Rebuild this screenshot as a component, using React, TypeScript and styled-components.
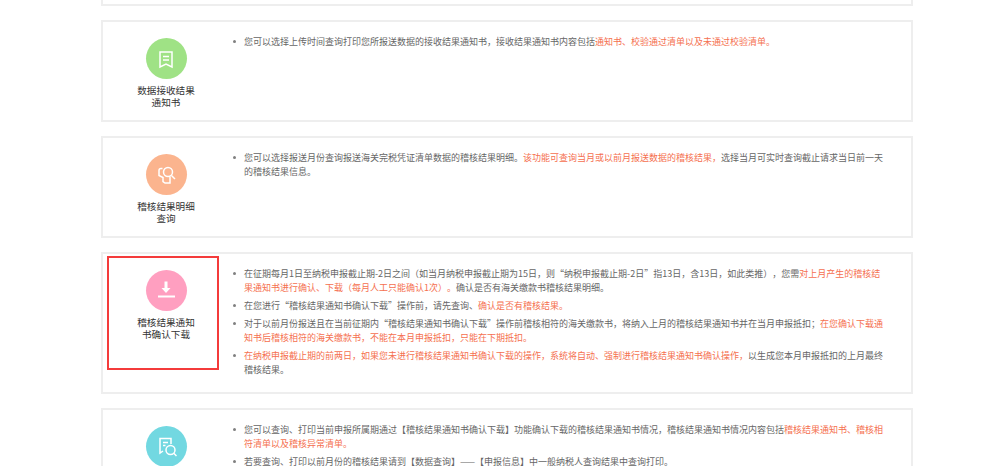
import React from "react";
import styled, { createGlobalStyle } from "styled-components";

const GlobalStyle = createGlobalStyle`
  html, body {
    margin: 0;
    padding: 0;
    height: 466px;
    overflow: hidden;
    background: #fff;
  }
`;

const Page = styled.div`
  padding: 0 87px 0 101px;
  font-family: "Noto Sans CJK SC", "Liberation Sans", sans-serif;
`;

const TopStub = styled.div`
  height: 4px;
  border: 2px solid #eeeeee;
  border-top: none;
  margin-bottom: 14px;
`;

const Card = styled.section<{ $height: number }>`
  position: relative;
  display: flex;
  box-sizing: border-box;
  height: ${(p) => p.$height}px;
  margin-bottom: 14px;
  border: 2px solid #eeeeee;
`;

const Side = styled.div`
  flex: none;
  width: 126px;
  padding-top: 16px;
  display: flex;
  flex-direction: column;
  align-items: center;
`;

const Circle = styled.div<{ $color: string }>`
  width: 41px;
  height: 41px;
  border-radius: 50%;
  background: ${(p) => p.$color};
  display: flex;
  align-items: center;
  justify-content: center;
`;

const Title = styled.div`
  width: 60px;
  margin-top: 6px;
  font-size: 9.6px;
  line-height: 11.5px;
  color: #333;
  text-align: center;
`;

const List = styled.ul`
  flex: 1;
  list-style: none;
  margin: 0;
  padding: 13px 23px 0 4px;
  font-size: 9px;
  line-height: 14px;
  color: #666;
  text-spacing-trim: space-all;
`;

const Item = styled.li`
  position: relative;
  padding-left: 11px;
  margin-bottom: 4px;

  &::before {
    content: "";
    position: absolute;
    left: 0;
    top: 5px;
    width: 3px;
    height: 3px;
    border-radius: 50%;
    background: #808080;
  }
`;

const Hot = styled.span`
  color: #f5704f;
`;

const Callout = styled.div`
  position: absolute;
  left: 4px;
  top: 2px;
  width: 108px;
  height: 110px;
  border: 2px solid #f43b3b;
`;

const IconSvg = styled.svg`
  width: 22px;
  height: 22px;
  fill: none;
  stroke: #fff;
  stroke-width: 1.5;
`;

const BookmarkIcon = () => (
  <IconSvg viewBox="0 0 22 22">
    <path d="M5 4h12v15l-6-3-6 3z" />
    <path d="M8 8.500h6M8 12h6" />
  </IconSvg>
);

const DetailIcon = () => (
  <IconSvg viewBox="0 0 22 22">
    <path d="M7.500 4.500H6a2 2 0 0 0-2 2v5l4 2v4l2 1.500h5v-6" />
    <circle cx="13" cy="8" r="4.500" />
    <path d="M16.500 11.500L20 15" />
  </IconSvg>
);

const DownloadIcon = () => (
  <IconSvg viewBox="0 0 22 22">
    <path d="M11 1.500v9" strokeWidth="3" />
    <path d="M6.500 8h9L11 13z" fill="#fff" stroke="none" />
    <path d="M3 16.500h17" strokeWidth="2" />
  </IconSvg>
);

const QueryIcon = () => (
  <IconSvg viewBox="0 0 22 22">
    <path d="M8 15l-3 2V2.500h11V8" />
    <path d="M8 6.500h5M8 9.500h2.500" />
    <circle cx="15.500" cy="14" r="4.500" />
    <path d="M18.800 17.300L21.500 20" />
  </IconSvg>
);

export default function App() {
  return (
    <Page>
      <GlobalStyle />
      <TopStub />

      <Card $height={102}>
        <Side>
          <Circle $color="#9fe285">
            <BookmarkIcon />
          </Circle>
          <Title>数据接收结果通知书</Title>
        </Side>
        <List>
          <Item>
            您可以选择上传时间查询打印您所报送数据的接收结果通知书，接收结果通知书内容包括
            <Hot>通知书、校验通过清单以及未通过校验清单。</Hot>
          </Item>
        </List>
      </Card>

      <Card $height={102}>
        <Side>
          <Circle $color="#fbb48e">
            <DetailIcon />
          </Circle>
          <Title>稽核结果明细查询</Title>
        </Side>
        <List>
          <Item>
            您可以选择报送月份查询报送海关完税凭证清单数据的稽核结果明细。
            <Hot>该功能可查询当月或以前月报送数据的稽核结果，</Hot>
            选择当月可实时查询截止请求当日前一天的稽核结果信息。
          </Item>
        </List>
      </Card>

      <Card $height={142}>
        <Callout />
        <Side>
          <Circle $color="#ff9fc0">
            <DownloadIcon />
          </Circle>
          <Title>稽核结果通知书确认下载</Title>
        </Side>
        <List>
          <Item>
            在征期每月1日至纳税申报截止期-2日之间（如当月纳税申报截止期为15日，则“纳税申报截止期-2日”指13日，含13日，如此类推），您需
            <Hot>对上月产生的稽核结果通知书进行确认、下载（每月人工只能确认1次）。</Hot>
            确认是否有海关缴款书稽核结果明细。
          </Item>
          <Item>
            在您进行“稽核结果通知书确认下载”操作前，请先查询、
            <Hot>确认是否有稽核结果。</Hot>
          </Item>
          <Item>
            对于以前月份报送且在当前征期内“稽核结果通知书确认下载”操作前稽核相符的海关缴款书，将纳入上月的稽核结果通知书并在当月申报抵扣；
            <Hot>在您确认下载通知书后稽核相符的海关缴款书，不能在本月申报抵扣，只能在下期抵扣。</Hot>
          </Item>
          <Item>
            <Hot>在纳税申报截止期的前两日，如果您未进行稽核结果通知书确认下载的操作，系统将自动、强制进行稽核结果通知书确认操作，</Hot>
            以生成您本月申报抵扣的上月最终稽核结果。
          </Item>
        </List>
      </Card>

      <Card $height={102}>
        <Side>
          <Circle $color="#72d8e1">
            <QueryIcon />
          </Circle>
        </Side>
        <List>
          <Item>
            您可以查询、打印当前申报所属期通过【稽核结果通知书确认下载】功能确认下载的稽核结果通知书情况，稽核结果通知书情况内容包括
            <Hot>稽核结果通知书、稽核相符清单以及稽核异常清单。</Hot>
          </Item>
          <Item>若要查询、打印以前月份的稽核结果请到【数据查询】——【申报信息】中一般纳税人查询结果中查询打印。</Item>
        </List>
      </Card>
    </Page>
  );
}
